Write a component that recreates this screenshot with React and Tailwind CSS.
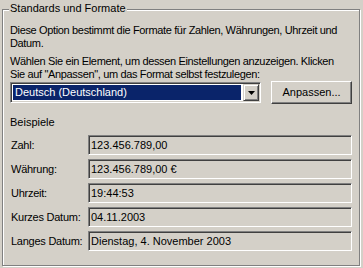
export default function App() {
  const rows = [
    ["Zahl:", "123.456.789,00"],
    ["Währung:", "123.456.789,00 €"],
    ["Uhrzeit:", "19:44:53"],
    ["Kurzes Datum:", "04.11.2003"],
    ["Langes Datum:", "Dienstag, 4. November 2003"],
  ];
  return (
    <div
      className="w-[363px] h-[268px] bg-[#d4d0c8] pt-[9px] overflow-hidden text-black text-[11px] leading-[13px]"
      style={{ fontFamily: '"Liberation Sans", Arial, sans-serif' }}
    >
      <div className="relative ml-[2px] w-[358px] h-[257px] border border-[#808080] shadow-[inset_1px_1px_0_#fff,1px_1px_0_#fff] pl-[7px] pt-[14px]">
        <div className="absolute left-[6px] top-[-8px] bg-[#d4d0c8] px-[1px]">Standards und Formate</div>
        <p className="whitespace-nowrap tracking-[-0.35px]">
          Diese Option bestimmt die Formate für Zahlen, Währungen, Uhrzeit und
          <br />
          Datum.
        </p>
        <p className="mt-[5px] whitespace-nowrap tracking-[-0.35px]">
          Wählen Sie ein Element, um dessen Einstellungen anzuzeigen. Klicken
          <br />
          Sie auf "Anpassen", um das Format selbst festzulegen:
        </p>
        <div className="flex items-center h-[23px]">
          <div className="w-[251px] h-[21px] border border-t-[#808080] border-l-[#808080] border-b-white border-r-white shadow-[inset_1px_1px_0_#404040,inset_-1px_-1px_0_#d4d0c8] bg-white flex p-[1px]">
            <div className="flex-1 m-[1px] mr-[2px] bg-[#0a246a] text-white pl-[2px] flex items-center">Deutsch (Deutschland)</div>
            <div className="w-[16px] h-[17px] bg-[#d4d0c8] border border-t-[#d4d0c8] border-l-[#d4d0c8] border-b-[#404040] border-r-[#404040] shadow-[inset_1px_1px_0_#fff,inset_-1px_-1px_0_#808080] flex items-center justify-center">
              <svg width="7" height="4" viewBox="0 0 7 4"><path d="M0 0h7L3.5 4z" fill="#000" /></svg>
            </div>
          </div>
          <div className="ml-[10px] w-[81px] h-[23px] border border-t-white border-l-white border-b-[#404040] border-r-[#404040] shadow-[inset_-1px_-1px_0_#808080] flex items-center justify-center">Anpassen...</div>
        </div>
        <div className="mt-[12px]">Beispiele</div>
        <div className="mt-[6px] flex flex-col gap-[4px]">
          {rows.map(([label, value]) => (
            <div key={label} className="flex items-center h-[20px]">
              <div className="w-[78px] tracking-[-0.25px] pl-[1px]">{label}</div>
              <div className="w-[264px] h-[20px] border border-t-[#808080] border-l-[#808080] border-b-white border-r-white shadow-[inset_1px_1px_0_#404040,inset_-1px_-1px_0_#d4d0c8] pl-[2px] flex items-center">
                {value}
              </div>
            </div>
          ))}
        </div>
      </div>
    </div>
  );
}
